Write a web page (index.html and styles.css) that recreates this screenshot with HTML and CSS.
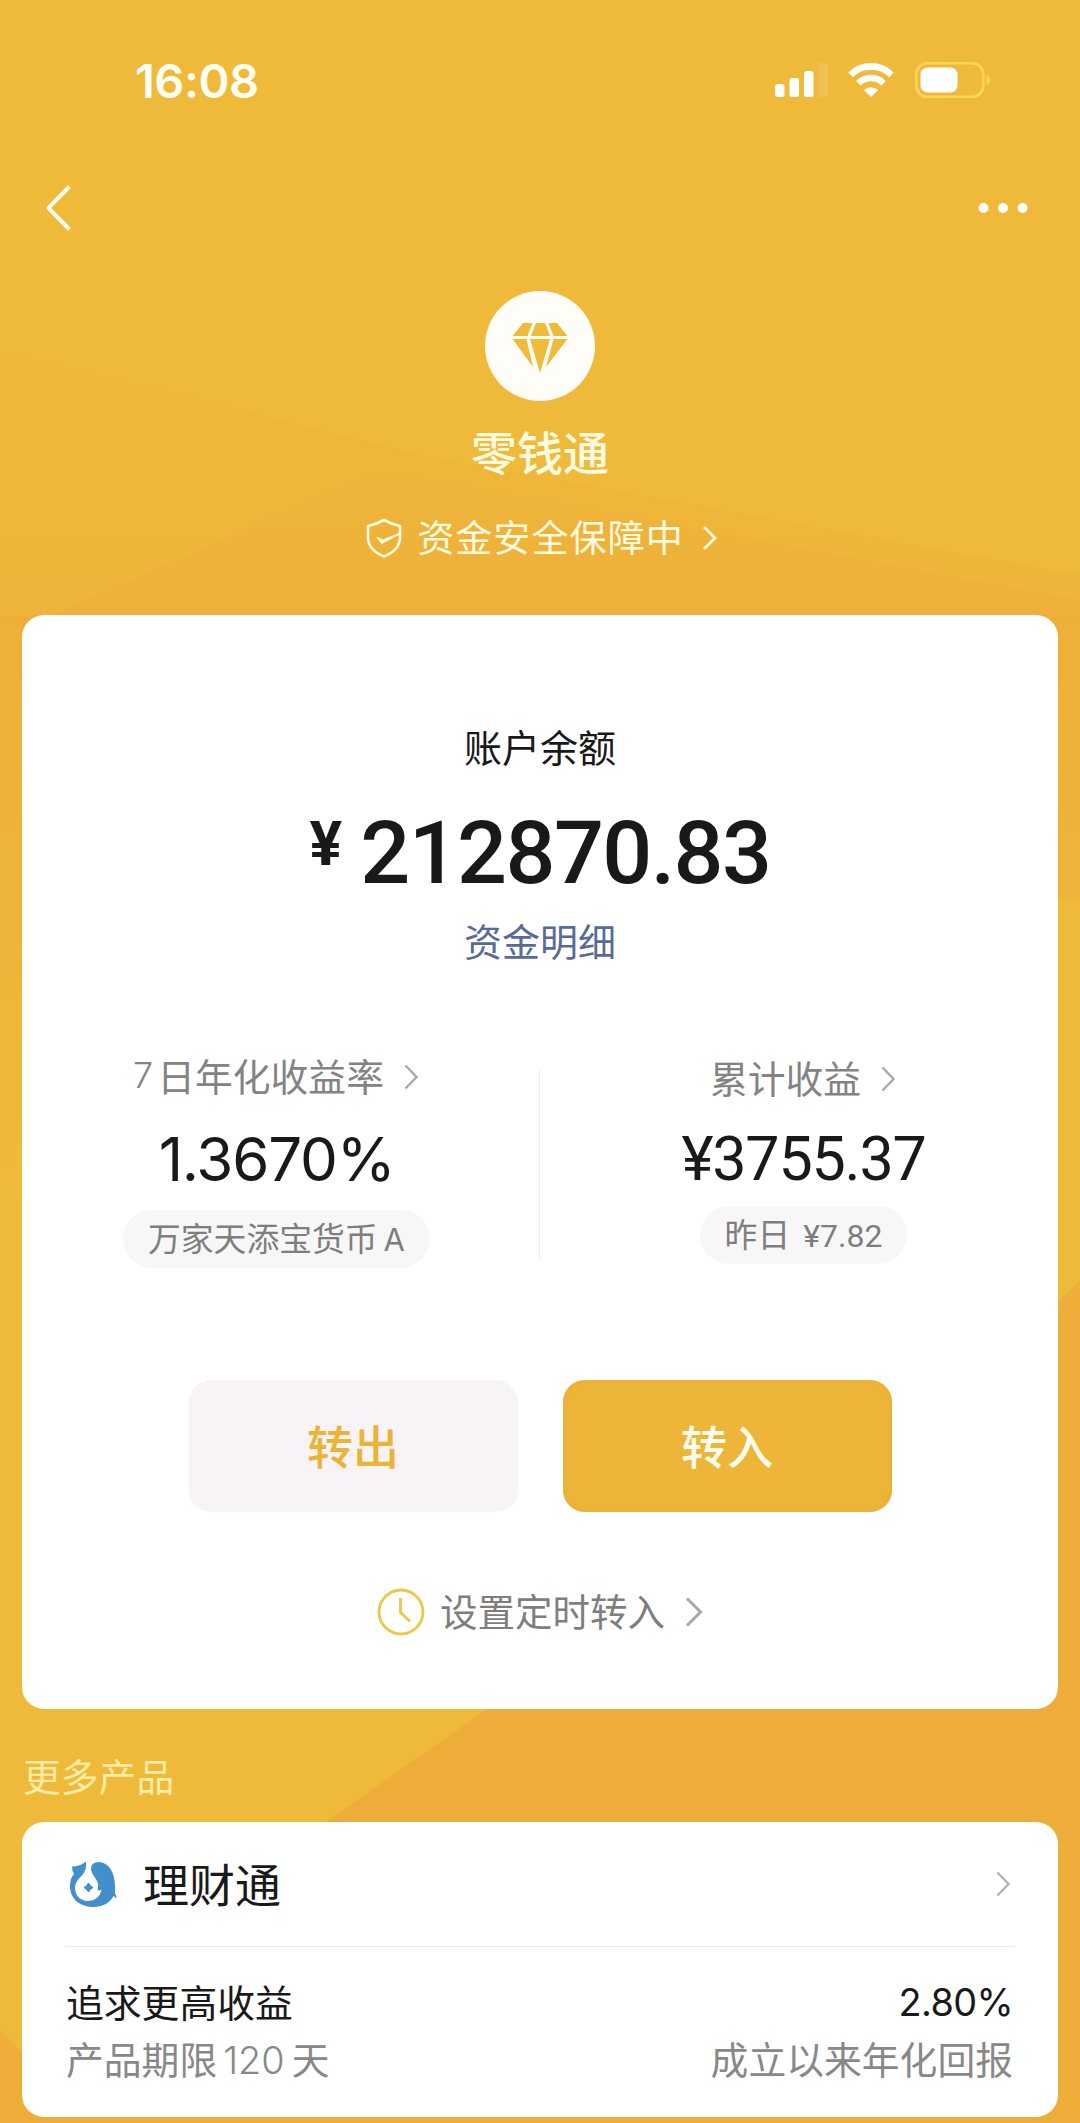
FILE: index.html
```html
<!DOCTYPE html>
<html lang="zh-CN">
<head>
  <meta charset="UTF-8">
  <title>零钱通</title>
  <link rel="stylesheet" href="styles.css">
</head>
<body>
  <!-- Background facets -->
  <svg class="bg" viewBox="0 0 1080 2123" preserveAspectRatio="none">
    <defs>
      <linearGradient id="fade" x1="0" y1="0" x2="0" y2="1">
        <stop offset="0" stop-color="#eeb039" stop-opacity="0.2"/>
        <stop offset="1" stop-color="#eeb039"/>
      </linearGradient>
      <linearGradient id="side" x1="0" y1="0" x2="0" y2="1">
        <stop offset="0" stop-color="#eeaf39"/>
        <stop offset="1" stop-color="#eeaf39" stop-opacity="0"/>
      </linearGradient>
    </defs>
    <path d="M0 350L420 455L1080 575V620H0z" fill="url(#fade)" opacity="0.5"/>
    <path d="M40 620L380 470L1080 600V620z" fill="url(#fade)"/>
    <path d="M0 615H40V1200H0zM1040 615H1080V900H1040z" fill="url(#side)"/>
    <path d="M1040 1320L1080 1280V2123H1040z" fill="#eeae39"/>
    <path d="M320 1826L500 1700H1080V1826zM0 2030L30 2060V2123H0zM0 2110H1080V2123H0z" fill="#eead39"/>
  </svg>

  <div class="status-bar">
    <div class="time">16:08</div>
    <div class="status-icons">
      <svg class="signal" width="54" height="36" viewBox="0 0 54 36" fill="#fff">
        <rect x="0" y="22" width="9.5" height="13" rx="2.5"/>
        <rect x="14.5" y="16" width="9.5" height="19" rx="2.5"/>
        <rect x="29" y="9" width="9.5" height="26" rx="2.5"/>
        <rect x="43.5" y="1" width="9.5" height="34" rx="2.5" opacity="0.15"/>
      </svg>
      <svg class="wifi" width="48" height="36" viewBox="0 0 48 36">
        <path d="M3.6 12.8A29 29 0 0 1 44.4 12.8" fill="none" stroke="#fff" stroke-width="6.6"/>
        <path d="M11.4 21.2A18 18 0 0 1 36.6 21.2" fill="none" stroke="#fff" stroke-width="6.4"/>
        <path d="M24 35L16.8 28Q24 22.6 31.2 28z" fill="#fff"/>
      </svg>
      <svg class="battery" width="76" height="36" viewBox="0 0 76 36">
        <rect x="1.3" y="1.3" width="67" height="33.4" rx="11" fill="none" stroke="#fbd75c" stroke-width="2.6"/>
        <rect x="5.5" y="5.5" width="37" height="25" rx="7" fill="#fff"/>
        <path d="M71.5 13Q75 14.5 75 18T71.5 23z" fill="#fbd75c"/>
      </svg>
    </div>
  </div>

  <div class="nav">
    <svg width="27" height="46" viewBox="0 0 27 46" fill="none" stroke="#fffef0" stroke-width="4"><path d="M24.5 1.5L3.5 23L24.5 44.5" stroke-linejoin="round"/></svg>
    <svg width="50" height="12" viewBox="0 0 50 12" fill="#fff"><circle cx="5.5" cy="6" r="5"/><circle cx="25" cy="6" r="5"/><circle cx="44.5" cy="6" r="5"/></svg>
  </div>

  <div class="hero">
    <div class="logo">
      <svg width="56" height="52" viewBox="0 0 56 52" fill="#efbb3b">
        <path d="M11 1H20.5L15.5 14H0.5zM24 1H33L38 14H18.8zM36.5 1H45L55.5 14H41.5z"/>
        <path d="M0.5 17H14.5L21 45zM18 17H38L28 51zM41.5 17H55.5L34 45z"/>
      </svg>
    </div>
    <div class="title">零钱通</div>
    <div class="secure">
      <svg class="shield" width="36" height="40" viewBox="0 0 36 40" fill="none" stroke="#fffbe0" stroke-width="2.6">
        <path d="M18 2Q26 6.5 34 8V20Q33.5 32 18 38.5Q2.5 32 2 20V8Q10 6.500 18 2z" stroke-linejoin="round"/>
        <path d="M11 19.5L16 25L34 15.5L16.5 22.5z" fill="#fffbe0" stroke-width="1.5"/>
      </svg>
      <span>资金安全保障中</span>
      <svg class="secure-arrow" width="16" height="26" viewBox="0 0 16 26" fill="none" stroke="#fffbe0" stroke-width="2.8"><path d="M2 2L13 13L2 24"/></svg>
    </div>
  </div>

  <div class="card balance">
    <div class="balance-label">账户余额</div>
    <div class="amount"><span class="yuan">¥</span><span class="digits">212870.83</span></div>
    <div class="detail-link">资金明细</div>

    <div class="stats">
      <div class="stat stat-left">
        <div class="stat-label"><span class="num">7</span>日年化收益率
          <svg width="14" height="26" viewBox="0 0 14 26" fill="none" stroke="#a8a8a8" stroke-width="2.4"><path d="M1.5 1.5L12.5 13L1.5 24.5"/></svg>
        </div>
        <div class="stat-value">1.3670%</div>
        <div class="pill">万家天添宝货币<span class="fund-class">A</span></div>
      </div>
      <div class="stat stat-right">
        <div class="stat-label">累计收益
          <svg width="14" height="26" viewBox="0 0 14 26" fill="none" stroke="#a8a8a8" stroke-width="2.4"><path d="M1.5 1.5L12.5 13L1.5 24.5"/></svg>
        </div>
        <div class="stat-value money">¥3755.37</div>
        <div class="pill">昨日<span class="pill-money">¥7.82</span></div>
      </div>
    </div>

    <div class="buttons">
      <button class="btn btn-out">转出</button>
      <button class="btn btn-in">转入</button>
    </div>

    <div class="schedule">
      <svg width="48" height="48" viewBox="0 0 48 48" fill="none" stroke="#ecc844" stroke-width="2.8"><circle cx="24" cy="24" r="22"/><path d="M23.5 10V24.5L33 33.5"/></svg>
      <span>设置定时转入</span>
      <svg width="18" height="30" viewBox="0 0 18 30" fill="none" stroke="#a8a8a8" stroke-width="3"><path d="M2 1.5L15.5 15L2 28.5"/></svg>
    </div>
  </div>

  <div class="more-title">更多产品</div>

  <div class="card product">
    <div class="product-head">
      <svg width="48" height="48" viewBox="0 0 48 48">
        <path d="M3 6.5Q11 6.5 17 1.5Q18 9 13.5 15C9 19 6 23 6 28C6 36 12 41 19 41C26 41 31 37 32.5 29.500Q30.500 31 28.5 30C32 21 23 17 22 9Q22 2 30 2C41 3 46 14 46 26V33L48 38.500L44.5 36C41 43 33 47 25 47C11 47 1 39 1 26Q1 18 5 14Q3 11 3 6.5z" fill="#428fcc"/>
        <path d="M19.500 23Q21 26 24 27.500Q21 29 19.500 32Q18 29 15 27.500Q18 26 19.500 23z" fill="#428fcc" stroke="#428fcc"/>
      </svg>
      <span class="product-name">理财通</span>
      <svg width="14" height="26" viewBox="0 0 14 26" fill="none" stroke="#b4b4b4" stroke-width="2.4"><path d="M1.5 1.5L12.5 13L1.5 24.5"/></svg>
    </div>
    <div class="product-row">
      <span>追求更高收益</span>
      <span class="rate">2.80%</span>
    </div>
    <div class="product-row sub">
      <span>产品期限<span class="days">120</span>天</span>
      <span>成立以来年化回报</span>
    </div>
  </div>
</body>
</html>
```
FILE: styles.css
```css
* {
  box-sizing: border-box;
}

body {
  margin: 0;
  width: 1080px;
  height: 2123px;
  overflow: hidden;
  position: relative;
  background: #efb93a;
  font-family: "Noto Sans CJK SC", sans-serif;
  font-weight: 400;
  color: #191919;
}

svg {
  display: block;
  flex-shrink: 0;
}

.bg {
  position: absolute;
  top: 0;
  left: 0;
  width: 100%;
  height: 100%;
  z-index: -1;
}

/* top bars */
.status-bar {
  height: 160px;
  padding: 0 89px 0 135px;
  display: flex;
  align-items: center;
  justify-content: space-between;
}

.time {
  font-family: Inter, sans-serif;
  font-size: 47px;
  font-weight: 600;
  letter-spacing: -0.5px;
  color: #fffef4;
}

.status-icons {
  display: flex;
}

.wifi {
  margin-left: 18px;
}

.battery {
  margin-left: 20px;
}

.nav {
  height: 96px;
  padding: 0 52px 0 45px;
  display: flex;
  align-items: center;
  justify-content: space-between;
}

/* header */
.hero {
  padding-top: 35px;
  display: flex;
  flex-direction: column;
  align-items: center;
  color: #fffbe0;
}

.logo {
  width: 110px;
  height: 110px;
  border-radius: 50%;
  background: #fffdf8;
  display: flex;
  align-items: center;
  justify-content: center;
  padding-top: 4px;
}

.title {
  margin-top: 19px;
  font-size: 46px;
  line-height: 60px;
  font-weight: 500;
}

.secure {
  margin: 31px 0 0 4px;
  display: flex;
  align-items: center;
  font-size: 37px;
  line-height: 50px;
  letter-spacing: 1.1px;
}

.secure span {
  margin-left: 15px;
}

.shield,
.secure-arrow {
  margin-top: 3px;
}

.secure-arrow {
  margin-left: 18px;
}

/* cards */
.card {
  margin: 0 22px;
  background: #fff;
  border-radius: 22px;
}

.balance {
  margin-top: 54px;
  height: 1094px;
  padding-top: 106px;
  text-align: center;
}

.balance-label,
.detail-link {
  font-size: 38px;
  line-height: 50px;
}

.amount {
  margin-top: 36px;
  height: 90px;
  display: flex;
  justify-content: center;
  font-family: Roboto, sans-serif;
  font-weight: 500;
}

.yuan {
  font-size: 61px;
  line-height: 75px;
  font-weight: 700;
  margin-right: 18px;
}

.digits {
  font-size: 88px;
  line-height: 91px;
  letter-spacing: -1.6px;
}

.detail-link {
  margin-top: 18px;
  color: #576b95;
}

.stats {
  margin-top: 85px;
  height: 218px;
  display: grid;
  grid-template-columns: 518px 518px;
  background: linear-gradient(#eee, #eee) 517px 20px / 1px 190px no-repeat;
}

.stat {
  display: flex;
  flex-direction: column;
  align-items: center;
}

.stat-left {
  padding-right: 9px;
}

.stat-right {
  padding: 2px 0 0 9px;
}

.stat-label {
  display: flex;
  align-items: center;
  font-size: 37.8px;
  line-height: 50px;
  color: #838383;
}

.stat-label svg {
  margin: 4px 2px 0 20px;
}

.num {
  font-family: Inter, sans-serif;
  font-size: 36px;
  font-weight: 300;
  margin-right: 4px;
}

.stat-value {
  margin-top: 24px;
  font-family: Inter, sans-serif;
  font-size: 60px;
  line-height: 70px;
  letter-spacing: -1.2px;
}

.money {
  margin-top: 22px;
  font-family: Roboto, sans-serif;
  font-size: 61px;
}

.pill {
  margin-top: 16px;
  height: 58px;
  padding: 0 25px;
  border-radius: 29px;
  background: #f7f7f7;
  font-size: 32.8px;
  line-height: 54px;
  color: #7e7e7e;
}

.stat-right .pill {
  margin-top: 12px;
}

.fund-class {
  font-family: Inter, sans-serif;
  font-size: 31px;
  margin-left: 6px;
}

.pill-money {
  font-family: Roboto, sans-serif;
  font-size: 32px;
  margin-left: 13px;
}

.buttons {
  margin-top: 112px;
  display: flex;
  justify-content: center;
  gap: 45px;
}

.btn {
  width: 329px;
  height: 132px;
  border: none;
  border-radius: 22px;
  padding: 0 0 4px;
  font-family: inherit;
  font-size: 46px;
  font-weight: 500;
}

.btn-out {
  background: #f7f3f7;
  color: #ebb436;
}

.btn-in {
  background: #eeb639;
  box-shadow: inset 0 0 18px #e6b038;
  color: #fffdf2;
}

.schedule {
  margin-top: 71px;
  display: flex;
  align-items: center;
  justify-content: center;
  font-size: 37.5px;
  line-height: 60px;
  color: #7e7e7e;
}

.schedule span {
  margin: -3px 20px 0 15px;
}

.more-title {
  margin: 41px 0 0 23px;
  font-size: 37.8px;
  line-height: 50px;
  color: #fceca6;
}

/* products */
.product {
  margin-top: 22px;
  height: 295px;
  padding: 0 43px;
}

.product-head {
  height: 125px;
  padding: 0 5px 0 4px;
  display: flex;
  align-items: center;
  border-bottom: 1px solid #ebebeb;
}

.product-name {
  flex: 1;
  margin: -4px 0 0 26px;
  font-size: 46px;
  line-height: 60px;
}

.product-row {
  display: flex;
  justify-content: space-between;
  padding: 0 2px 0 1px;
  margin-top: 29px;
  font-size: 37.8px;
  line-height: 50px;
}

.product-row.sub {
  margin-top: 7px;
  color: #888;
}

.rate {
  font-family: Inter, sans-serif;
  letter-spacing: -0.6px;
  line-height: 53px;
  height: 50px;
}

.days {
  font-family: Inter, sans-serif;
  font-weight: 300;
  margin: 0 7px 0 6px;
}
```
